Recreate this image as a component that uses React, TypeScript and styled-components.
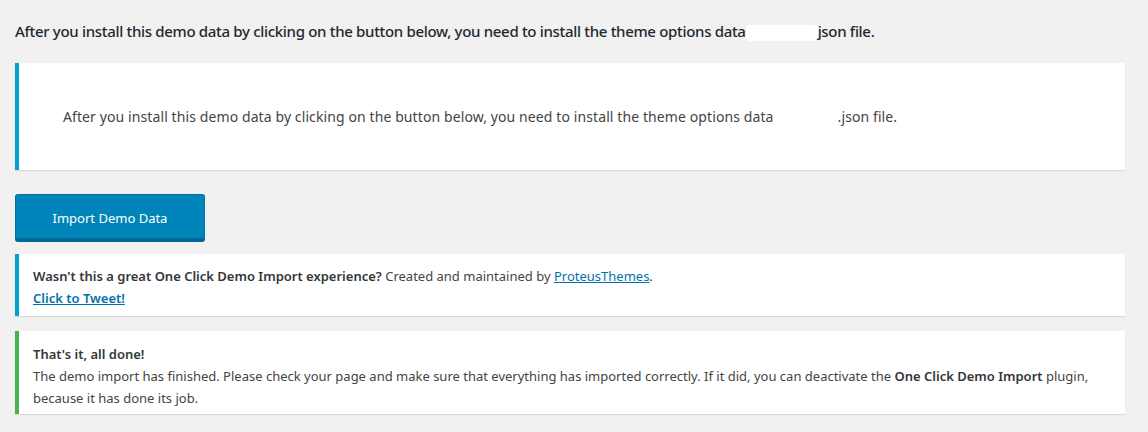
import React from "react";
import styled, { createGlobalStyle } from "styled-components";

const Global = createGlobalStyle`
  html, body { margin: 0; padding: 0; background: #f1f1f1; }
  body { font-family: "Noto Sans", "Open Sans", sans-serif; color: #444; }
`;

const Page = styled.div`
  padding: 18px 23px 18px 15px;
  display: flex;
  flex-direction: column;
`;

const Intro = styled.p`
  margin: 0 0 19px;
  font-size: 15px;
  line-height: 26px;
  letter-spacing: -0.32px;
  color: #23282d;
  font-weight: 500;
`;

const Redact = styled.span<{ w: number }>`
  display: inline-block;
  width: ${(p) => p.w}px;
  height: 16px;
  vertical-align: middle;
  background: #fff;
  border-radius: 4px;
`;

const Notice = styled.div<{ accent: string; pad: string }>`
  background: #fff;
  border-left: 4px solid ${(p) => p.accent};
  box-shadow: 0 1px 1px rgba(0, 0, 0, 0.1);
  padding: ${(p) => p.pad};
`;

const BigText = styled.p`
  margin: 0;
  font-size: 14px;
  line-height: 22px;
  letter-spacing: 0.1px;
  color: #444;
`;

const SmallText = styled.p`
  margin: 0;
  font-size: 13px;
  line-height: 22px;
  color: #444;
  strong { font-weight: 600; color: #32373c; }
`;

const Link = styled.a`
  color: #0073aa;
  text-decoration: underline;
  font-weight: 600;
`;

const PlainLink = styled.a`
  color: #0073aa;
  text-decoration: underline;
`;

const Button = styled.button`
  margin: 24px 0 13px;
  width: 190px;
  height: 47px;
  background: #0085ba;
  border: 1px solid #0073aa;
  border-bottom: 3px solid #006799;
  border-radius: 3px;
  color: #fff;
  font-family: inherit;
  font-size: 13px;
  padding: 2px 0 0;
  cursor: pointer;
  box-shadow: 0 1px 0 #006799;
`;

const Gap = styled.div`
  height: 15px;
`;

export default function App() {
  return (
    <>
      <Global />
      <Page>
        <Intro>
          After you install this demo data by clicking on the button below, you need to install the theme options data
          <Redact w={72} />json file.
        </Intro>
        <Notice accent="#00a0d2" pad="43px 20px 42px 44px">
          <BigText>
            After you install this demo data by clicking on the button below, you need to install the theme options data
            <Redact w={64} />.json file.
          </BigText>
        </Notice>
        <div>
          <Button>Import Demo Data</Button>
        </div>
        <Notice accent="#00a0d2" pad="11px 14px 7px 14px">
          <SmallText>
            <strong>Wasn't this a great One Click Demo Import experience?</strong> Created and maintained by{" "}
            <PlainLink href="#">ProteusThemes</PlainLink>.
            <br />
            <Link href="#">Click to Tweet!</Link>
          </SmallText>
        </Notice>
        <Gap />
        <Notice accent="#46b450" pad="12px 14px 5px 14px">
          <SmallText>
            <strong>That's it, all done!</strong>
            <br />
            The demo import has finished. Please check your page and make sure that everything has imported correctly. If it did, you can deactivate the <strong>One Click Demo Import</strong> plugin, because it has done its job.
          </SmallText>
        </Notice>
      </Page>
    </>
  );
}
